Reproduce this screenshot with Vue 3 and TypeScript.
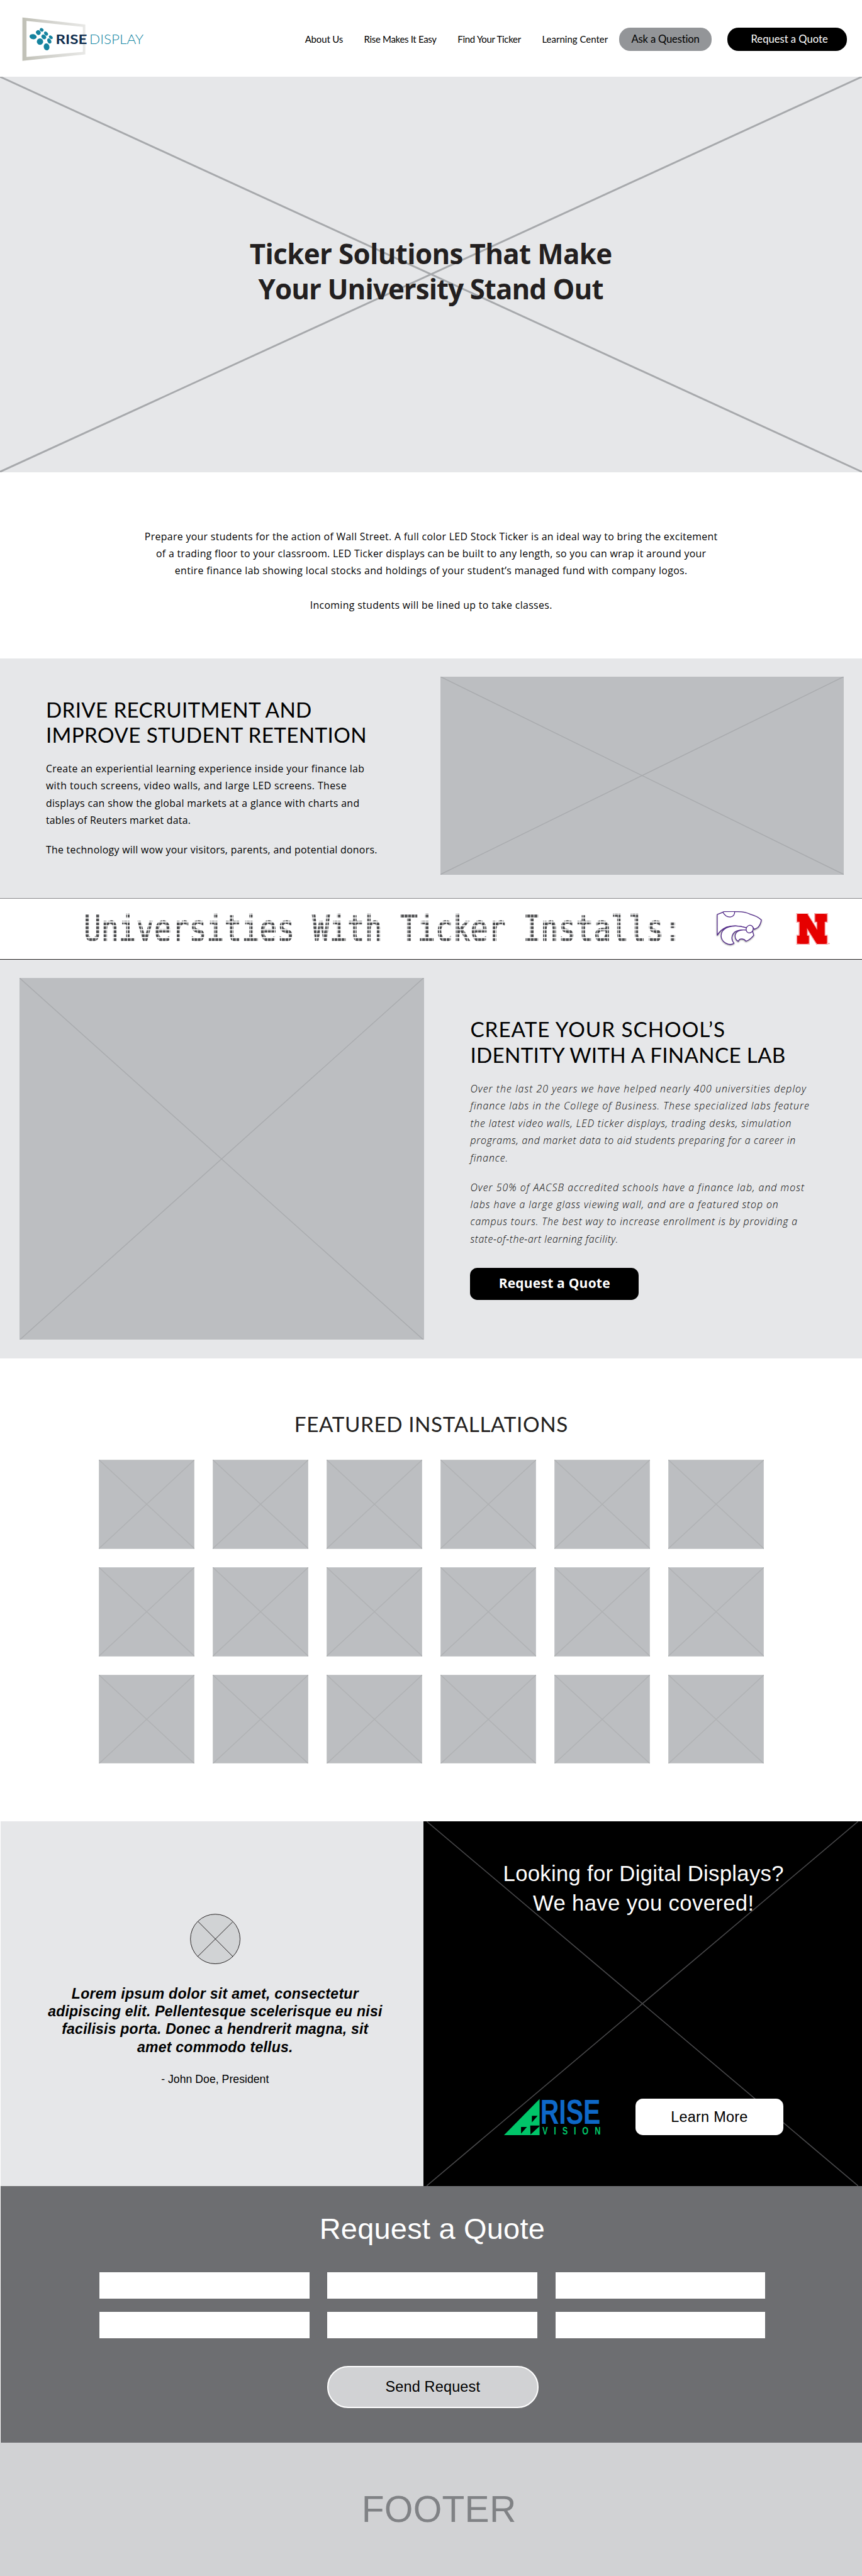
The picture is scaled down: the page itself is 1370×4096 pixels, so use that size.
<script setup lang="ts">
import type { Directive } from 'vue'

type Line = [text: string, width: number]

// Tracks a line of type so that it sets to the given measure.
const vFit: Directive<HTMLElement, number> = {
  mounted(el, binding) {
    const text = (el.textContent ?? '').trim()
    const ctx = document.createElement('canvas').getContext('2d')
    if (!ctx || text.length < 2) return
    const cs = getComputedStyle(el)
    ctx.font = `${cs.fontStyle} ${cs.fontWeight} ${cs.fontSize} ${cs.fontFamily}`
    const spacing = (binding.value - ctx.measureText(text).width) / (text.length - 1)
    el.style.letterSpacing = `${spacing}px`
    el.style.marginRight = `${-spacing}px`
  },
}

const nav: Line[] = [
  ['About Us', 62],
  ['Rise Makes It Easy', 118],
  ['Find Your Ticker', 104.5],
  ['Learning Center', 107],
]

const heroTitle: Line[] = [
  ['Ticker Solutions That Make', 589],
  ['Your University Stand Out', 561],
]

const intro: Line[] = [
  ['Prepare your students for the action of Wall Street. A full color LED Stock Ticker is an ideal way to bring the excitement', 930],
  ['of a trading floor to your classroom. LED Ticker displays can be built to any length, so you can wrap it around your', 893],
  ['entire finance lab showing local stocks and holdings of your student’s managed fund with company logos.', 832],
]
const introClose: Line[] = [['Incoming students will be lined up to take classes.', 393]]

const driveTitle: Line[] = [
  ['DRIVE RECRUITMENT AND', 434],
  ['IMPROVE STUDENT RETENTION', 522],
]
const driveCopy: Line[][] = [
  [
    ['Create an experiential learning experience inside your finance lab', 517],
    ['with touch screens, video walls, and large LED screens. These', 488],
    ['displays can show the global markets at a glance with charts and', 509],
    ['tables of Reuters market data.', 235],
  ],
  [['The technology will wow your visitors, parents, and potential donors.', 538]],
]

const tickerWords = 'Universities With Ticker Installs:'

const labTitle: Line[] = [
  ['CREATE YOUR SCHOOL’S', 415],
  ['IDENTITY WITH A FINANCE LAB', 516],
]
const labCopy: Line[][] = [
  [
    ['Over the last 20 years we have helped nearly 400 universities deploy', 545],
    ['finance labs in the College of Business. These specialized labs feature', 550],
    ['the latest video walls, LED ticker displays, trading desks, simulation', 521],
    ['programs, and market data to aid students preparing for a career in', 528],
    ['finance.', 61],
  ],
  [
    ['Over 50% of AACSB accredited schools have a finance lab, and most', 542],
    ['labs have a large glass viewing wall, and are a featured stop on', 500],
    ['campus tours. The best way to increase enrollment is by providing a', 531],
    ['state-of-the-art learning facility.', 240],
  ],
]

const quote: Line[] = [
  ['Lorem ipsum dolor sit amet, consectetur', 466],
  ['adipiscing elit. Pellentesque scelerisque eu nisi', 543],
  ['facilisis porta. Donec a hendrerit magna, sit', 498],
  ['amet commodo tellus.', 253],
]

const promo: Line[] = [
  ['Looking for Digital Displays?', 456],
  ['We have you covered!', 359],
]

const logoDots = [
  [54, 59, 5.8, 4.2, 10],
  [62.5, 52.3, 3.7, 4, -40],
  [67.9, 48, 2.7, 3.3, -50],
  [75, 54, 2.6, 3.7, -45],
  [82.8, 60, 2.3, 3.6, -50],
  [71.4, 59.3, 3.3, 4.3, -45],
  [80.3, 66, 3, 4.4, -25],
  [65.2, 67, 5.1, 5.3, 0],
  [75.9, 75.6, 4.6, 5.7, -12],
]

// Nebraska mark: pink keyline, white gap, red body.
const huskerLayers = [
  { stroke: '#f2777c', width: 8 },
  { stroke: '#ffffff', width: 4.5 },
  { stroke: '#e60000', width: 1 },
]
const huskerBars = [
  [524, 107, 50, 38],
  [536, 107, 36, 145],
  [524, 213, 57, 39],
  [612, 107, 57, 38],
  [622, 107, 36, 145],
  [622, 213, 47, 39],
]
</script>

<template>
  <div class="page">
    <header class="header">
      <svg class="brand" viewBox="36 27 200 72">
        <defs>
          <linearGradient id="frame" x1="0" x2="1" y1="0" y2="0">
            <stop offset="0" stop-color="#c0c0b6" />
            <stop offset="0.45" stop-color="#d3d3ce" />
            <stop offset="1" stop-color="#e8e8e6" />
          </linearGradient>
        </defs>
        <path
          d="M36.6 27.7L138.8 39.3V87.7L36.6 98.3ZM43.3 33.3V92L134.8 83.7V43Z"
          fill="url(#frame)"
          fill-rule="evenodd"
        />
        <ellipse
          v-for="(d, i) in logoDots"
          :key="i"
          :cx="d[0]"
          :cy="d[1]"
          :rx="d[2]"
          :ry="d[3]"
          :transform="`rotate(${d[4]} ${d[0]} ${d[1]})`"
          fill="#15839f"
        />
        <text class="brand-rise" x="90.6" y="70.8" textLength="51" lengthAdjust="spacingAndGlyphs">RISE</text>
        <text class="brand-display" x="145.4" y="70.8" textLength="88" lengthAdjust="spacingAndGlyphs">DISPLAY</text>
      </svg>
      <nav class="nav">
        <a v-for="item in nav" :key="item[0]" class="nav-link"><span v-fit="item[1]" class="fit">{{ item[0] }}</span></a>
        <a class="pill pill-ask"><span v-fit="111" class="fit">Ask a Question</span></a>
        <a class="pill pill-quote"><span v-fit="125" class="fit">Request a Quote</span></a>
      </nav>
    </header>

    <section class="hero">
      <svg class="cross" preserveAspectRatio="none" viewBox="0 0 100 100"><path d="M0 0L100 100M100 0L0 100" /></svg>
      <h1 class="hero-title">
        <span v-for="l in heroTitle" :key="l[0]" class="row"><span v-fit="l[1]" class="fit">{{ l[0] }}</span></span>
      </h1>
    </section>

    <section class="intro">
      <p><span v-for="l in intro" :key="l[0]" class="row"><span v-fit="l[1]" class="fit">{{ l[0] }}</span></span></p>
      <p class="intro-close"><span v-for="l in introClose" :key="l[0]" class="row"><span v-fit="l[1]" class="fit">{{ l[0] }}</span></span></p>
    </section>

    <section class="drive">
      <div class="drive-copy">
        <h2 class="title"><span v-for="l in driveTitle" :key="l[0]" class="row"><span v-fit="l[1]" class="fit">{{ l[0] }}</span></span></h2>
        <p v-for="(p, i) in driveCopy" :key="i" class="body"><span v-for="l in p" :key="l[0]" class="row"><span v-fit="l[1]" class="fit">{{ l[0] }}</span></span></p>
      </div>
      <div class="media drive-media">
        <svg class="cross" preserveAspectRatio="none" viewBox="0 0 100 100"><path d="M0 0L100 100M100 0L0 100" /></svg>
      </div>
    </section>

    <section class="ticker">
      <div class="ticker-text"><span class="led">{{ tickerWords }}</span></div>
      <svg class="wildcat" viewBox="126 90 231 180">
        <g fill="#fff" stroke="#512888" stroke-width="4" stroke-linejoin="round" stroke-linecap="round">
          <path d="M135 213V112L162 101Q165 97 172 98H236Q270 98 297 111Q330 120 350 138Q347 160 333 175L316 184L306 170Q290 170 276 176Q225 160 180 173Q150 186 135 213Z" />
          <path d="M163 101C170 116 184 124 198 124C212 122 220 112 220 99" />
          <path d="M276 176C225 160 180 168 161 192C147 215 155 240 178 252C192 259 208 259 217 252C202 235 203 214 219 198C235 187 256 185 276 189" />
          <path d="M276 188C245 184 224 195 222 216C222 230 228 238 238 243Q241 230 256 231Q270 232 274 242Q292 238 313 213L306 191Z" />
          <ellipse cx="293" cy="183" rx="17" ry="19" transform="rotate(24 293 183)" />
        </g>
      </svg>
      <svg class="husker" viewBox="518 100 166 158">
        <g v-for="layer in huskerLayers" :key="layer.stroke" fill="#e60000" :stroke="layer.stroke" :stroke-width="layer.width">
          <rect v-for="(b, i) in huskerBars" :key="i" :x="b[0]" :y="b[1]" :width="b[2]" :height="b[3]" />
          <rect width="44" height="145" transform="translate(529 107) skewX(32)" />
        </g>
        <circle cx="679" cy="251" r="3" fill="#f07078" />
      </svg>
    </section>

    <section class="lab">
      <div class="media lab-media">
        <svg class="cross" preserveAspectRatio="none" viewBox="0 0 100 100"><path d="M0 0L100 100M100 0L0 100" /></svg>
      </div>
      <div class="lab-copy">
        <h2 class="title lab-title"><span v-for="l in labTitle" :key="l[0]" class="row"><span v-fit="l[1]" class="fit">{{ l[0] }}</span></span></h2>
        <p v-for="(p, i) in labCopy" :key="i" class="body light"><span v-for="l in p" :key="l[0]" class="row"><span v-fit="l[1]" class="fit">{{ l[0] }}</span></span></p>
        <a class="lab-button"><span v-fit="181" class="fit">Request a Quote</span></a>
      </div>
    </section>

    <section class="featured">
      <h2 class="title featured-title"><span v-fit="444" class="fit">FEATURED INSTALLATIONS</span></h2>
      <div class="tiles">
        <div v-for="n in 18" :key="n" class="media tile">
          <svg class="cross" preserveAspectRatio="none" viewBox="0 0 100 100"><path d="M0 0L100 100M100 0L0 100" /></svg>
        </div>
      </div>
    </section>

    <section class="split">
      <div class="testimonial">
        <svg class="avatar" viewBox="0 0 82 82">
          <circle cx="41" cy="41" r="40.3" />
          <path d="M13 12.5L69.5 69.5M69 13.5L12.5 69.5" />
        </svg>
        <blockquote class="quote"><span v-for="l in quote" :key="l[0]" class="row"><span v-fit="l[1]" class="fit">{{ l[0] }}</span></span></blockquote>
        <p class="cite"><span v-fit="175" class="fit">- John Doe, President</span></p>
      </div>
      <div class="promo">
        <svg class="cross promo-cross" preserveAspectRatio="none" viewBox="0 0 100 100"><path d="M0 0L100 100M100 0L0 100" /></svg>
        <h2 class="promo-title"><span v-for="l in promo" :key="l[0]" class="row"><span v-fit="l[1]" class="fit">{{ l[0] }}</span></span></h2>
        <div class="promo-row">
          <svg class="vision" viewBox="818.7 3410.4 156 60">
            <path d="M818.7 3469.6L876.5 3410.8V3469.6Z" fill="#00c569" />
            <path d="M864 3438.3H873.4L864 3449ZM846.4 3456.3H856L846.4 3467ZM861.3 3454H876.5V3455L861.8 3468.6Z" fill="#000" />
            <text class="vision-rise" x="877.6" y="3451" textLength="98" lengthAdjust="spacingAndGlyphs">RISE</text>
            <text class="vision-sub" transform="translate(881 3469) scale(0.75 1)" textLength="126" lengthAdjust="spacing">VISION</text>
          </svg>
          <a class="promo-button"><span v-fit="125" class="fit">Learn More</span></a>
        </div>
      </div>
    </section>

    <section class="request">
      <h2 class="request-title"><span v-fit="366" class="fit">Request a Quote</span></h2>
      <form class="fields">
        <div v-for="n in 6" :key="n" class="field"></div>
      </form>
      <a class="send"><span v-fit="154" class="fit">Send Request</span></a>
    </section>

    <footer class="footer"><span v-fit="251" class="fit">FOOTER</span></footer>
  </div>
</template>

<style>
body {
  margin: 0;
  background: #fff;
}
</style>

<style scoped>
.page {
  width: 1400px;
  zoom: 0.978571;
  background: #fff;
  color: #000;
  font-family: Lato, 'Open Sans', sans-serif;
  overflow: hidden;
}
h1,
h2,
p,
blockquote {
  margin: 0;
  font-weight: 400;
}
.row {
  display: block;
}
.fit {
  display: inline-block;
  white-space: nowrap;
}

.header {
  height: 125px;
  box-sizing: border-box;
  padding: 2.6px 24.6px 0 36px;
  display: flex;
  align-items: center;
  justify-content: space-between;
}
.brand {
  width: 200px;
  height: 72px;
  overflow: visible;
}
.brand-rise {
  font: 700 22.2px Lato, sans-serif;
  fill: #0f2d4d;
}
.brand-display {
  font: 300 22.2px Lato, sans-serif;
  fill: #1386a3;
}
.nav {
  display: flex;
  align-items: center;
  font-size: 15.3px;
  line-height: 20px;
}
.nav-link {
  margin-right: 34px;
}
.nav-link:nth-child(4) {
  margin-right: 18.5px;
}
.pill {
  height: 37.7px;
  border-radius: 18px;
  display: flex;
  align-items: center;
  justify-content: center;
  font-size: 17px;
}
.pill-ask {
  width: 150px;
  margin-right: 25px;
  background: #939598;
}
.pill-quote {
  width: 194.6px;
  box-sizing: border-box;
  padding-left: 8px;
  background: #000;
  color: #fff;
}

.cross {
  position: absolute;
  inset: 0;
  width: 100%;
  height: 100%;
}
.cross path {
  fill: none;
  stroke: #a7a9ac;
  stroke-width: 1px;
  vector-effect: non-scaling-stroke;
}
.hero {
  position: relative;
  height: 642px;
  box-sizing: border-box;
  padding-top: 257.8px;
  background: #e6e7e9;
  text-align: center;
}
.hero .cross path {
  stroke-width: 3px;
}
.hero-title {
  position: relative;
  font-family: 'Open Sans', sans-serif;
  font-size: 44.8px;
  line-height: 57.3px;
  font-weight: 700;
  color: #231f20;
}

.intro {
  height: 303px;
  box-sizing: border-box;
  padding-top: 91px;
  text-align: center;
  font-family: 'Open Sans', sans-serif;
  font-size: 16.2px;
  line-height: 28px;
}
.intro-close {
  margin-top: 28px;
}

.title {
  font-size: 34px;
  line-height: 41px;
}
.body {
  margin-top: 20px;
  font-family: 'Open Sans', sans-serif;
  font-size: 16.2px;
  line-height: 28px;
}
.light {
  font-weight: 300;
  font-style: italic;
}
.media {
  position: relative;
  background: #bcbec1;
}
.media .cross path {
  stroke: #a9abae;
  stroke-width: 1.5px;
}

.drive {
  height: 389px;
  display: flex;
  background: #e6e7e9;
}
.drive-copy {
  width: 641px;
  padding: 62.3px 0 0 74.5px;
}
.drive-copy .title {
  margin-bottom: 21px;
}
.drive-media {
  width: 655px;
  height: 321.3px;
  margin-top: 29.7px;
}

.ticker {
  height: 100px;
  box-sizing: border-box;
  border-top: 2px solid #8a8a8c;
  border-bottom: 1px solid #231f20;
  display: flex;
  align-items: flex-start;
}
.ticker-text {
  width: 963px;
  height: 54px;
  margin: 21.6px 0 0 136px;
}
.led {
  --dots-x: linear-gradient(90deg, #000 78%, transparent 78%);
  --dots-y: linear-gradient(180deg, #000 72%, transparent 72%);
  display: block;
  width: max-content;
  font: 400 58.5px/54px 'DejaVu Sans Mono', monospace;
  letter-spacing: 0.35px;
  color: #4d4e50;
  -webkit-text-stroke: 1.6px #4d4e50;
  transform-origin: 0 0;
  transform: scaleX(0.803);
  mask-image: var(--dots-x), var(--dots-y);
  mask-size: 7.1px 100%, 100% 6.4px;
  mask-position: 4px 0, 0 4.4px;
  mask-composite: intersect;
}
.wildcat {
  width: 77px;
  height: 60px;
  margin: 19px 0 0 63px;
  filter: drop-shadow(0 1.5px 1px rgba(0, 0, 0, 0.45));
}
.husker {
  width: 55.3px;
  height: 52.7px;
  margin: 22.3px 0 0 53.6px;
  overflow: visible;
}

.lab {
  height: 648.5px;
  display: flex;
  background: #e6e7e9;
}
.lab-media {
  width: 656.3px;
  height: 588.3px;
  margin: 29.7px 0 0 32px;
}
.lab-copy {
  padding: 92px 0 0 75.5px;
}
.lab-title {
  line-height: 42.3px;
}
.lab-button {
  width: 273.3px;
  height: 52.2px;
  box-sizing: border-box;
  padding-bottom: 4px;
  margin-top: 33px;
  border-radius: 12px;
  background: #000;
  color: #fff;
  font-family: 'Open Sans', sans-serif;
  font-size: 21.5px;
  font-weight: 700;
  display: flex;
  align-items: center;
  justify-content: center;
}

.featured {
  height: 752px;
}
.featured-title {
  padding-top: 85.3px;
  text-align: center;
  color: #231f20;
}
.tiles {
  display: grid;
  grid-template-columns: repeat(6, 155.6px);
  grid-auto-rows: 144.7px;
  gap: 29.8px 29.4px;
  margin: 38.4px 0 0 160.4px;
}
.tile {
  box-shadow: inset 0 0 0 1px #c8cacc;
}
.tile .cross path {
  stroke: #b0b2b4;
}

.split {
  height: 592.5px;
  display: flex;
  margin-left: 1px;
}
.testimonial {
  width: 686.5px;
  box-sizing: border-box;
  padding: 150.5px 0 0 10px;
  background: #e6e7e9;
  display: flex;
  flex-direction: column;
  align-items: center;
  text-align: center;
  font-family: 'Liberation Sans', Arial, sans-serif;
}
.avatar {
  width: 82px;
  height: 82px;
}
.avatar circle {
  fill: #d1d3d5;
  stroke: #231f20;
}
.avatar path {
  stroke: #231f20;
}
.quote {
  margin-top: 32.8px;
  font-size: 23.5px;
  line-height: 29px;
  font-weight: 700;
  font-style: italic;
}
.cite {
  margin-top: 27px;
  font-size: 18px;
  line-height: 22px;
}
.promo {
  position: relative;
  flex: 1;
  background: #000;
  color: #fff;
  font-family: 'Liberation Sans', Arial, sans-serif;
}
.promo-cross {
  left: 5.8px;
  width: 701px;
}
.promo-cross path {
  stroke: #48484a;
  stroke-width: 1.6px;
}
.promo-title {
  position: relative;
  padding: 61px 0 0 2.4px;
  text-align: center;
  font-size: 35.5px;
  line-height: 48px;
}
.promo-row {
  position: relative;
  display: flex;
  gap: 57.5px;
  margin: 294px 0 0 131.2px;
}
.vision {
  width: 156px;
  height: 60px;
  overflow: visible;
}
.vision-rise {
  font: 700 56px 'Liberation Sans', sans-serif;
  fill: #0e68c8;
}
.vision-sub {
  font: 700 17.5px 'Liberation Sans', sans-serif;
  fill: #00c569;
}
.promo-button {
  width: 239.6px;
  height: 58.8px;
  border-radius: 12px;
  background: #fff;
  color: #000;
  font-size: 24px;
  display: flex;
  align-items: center;
  justify-content: center;
}

.request {
  height: 417px;
  margin-left: 1px;
  box-sizing: border-box;
  padding-top: 42.4px;
  background: #6d6e71;
  font-family: 'Liberation Sans', Arial, sans-serif;
}
.request-title {
  font-size: 48px;
  line-height: 56px;
  color: #fff;
  text-align: center;
  padding-left: 2.6px;
}
.fields {
  display: grid;
  grid-template-columns: repeat(3, 341px);
  grid-auto-rows: 42.6px;
  gap: 21.9px 29.2px;
  margin: 42.2px 0 0 160.6px;
}
.field {
  background: #fff;
}
.send {
  width: 343px;
  height: 68px;
  box-sizing: border-box;
  margin: 45px 0 0 530.3px;
  border: 3px solid #fff;
  border-radius: 34px;
  background: #d1d2d4;
  font-size: 24px;
  display: flex;
  align-items: center;
  justify-content: center;
}

.footer {
  height: 217px;
  box-sizing: border-box;
  padding: 73.8px 0 0 25.6px;
  background: #d1d2d4;
  color: #808285;
  text-align: center;
  font: 60px/70px 'Liberation Sans', Arial, sans-serif;
}
</style>
